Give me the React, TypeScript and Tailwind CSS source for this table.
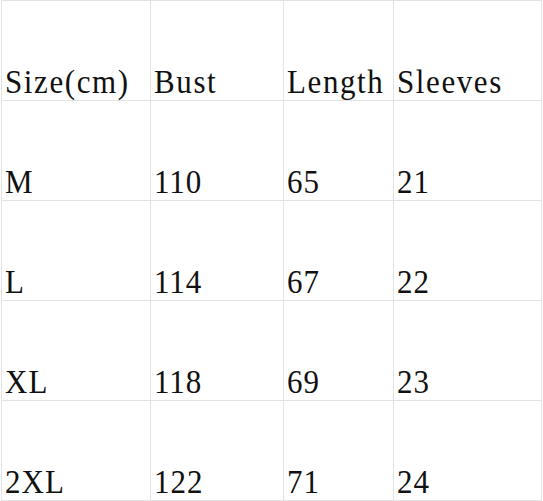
const header = ["Size(cm)", "Bust", "Length", "Sleeves"];

const rows = [
  ["M", "110", "65", "21"],
  ["L", "114", "67", "22"],
  ["XL", "118", "69", "23"],
  ["2XL", "122", "71", "24"],
];

function Cell({ text, head }: { text: string; head?: boolean }) {
  return (
    <div className="h-[100px] border-r border-b border-[#e3e3e3] flex items-end pl-[3px] pb-[2px]">
      <span
        className={
          "inline-block origin-bottom scale-y-[1.08] text-[31px] leading-none text-[#111] " +
          (head ? "tracking-[1.6px]" : "tracking-[1px]")
        }
      >
        {text}
      </span>
    </div>
  );
}

export default function App() {
  return (
    <div className="w-[543px] h-[501px] bg-white overflow-hidden font-['Liberation_Serif',serif]">
      <div className="ml-px grid grid-cols-[149px_133px_110px_148px] w-fit border-l border-t border-[#e3e3e3]">
        {header.map((h) => (
          <Cell key={h} text={h} head />
        ))}
        {rows.map((r) => r.map((c, i) => <Cell key={r[0] + i} text={c} />))}
      </div>
    </div>
  );
}
